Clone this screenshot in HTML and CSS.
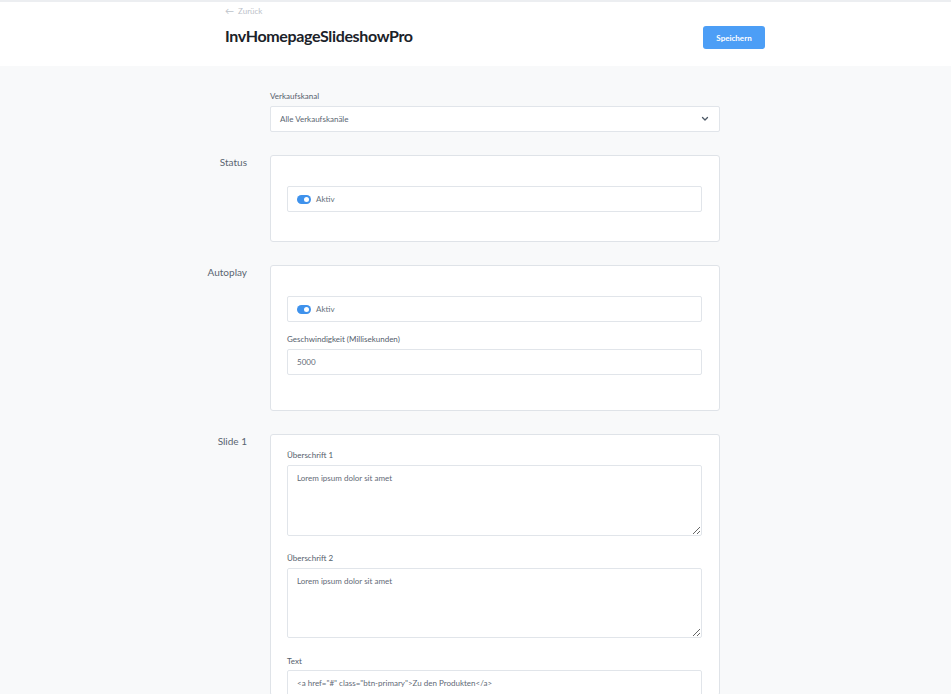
FILE: index.html
```html
<!DOCTYPE html>
<html lang="de">
<head>
<meta charset="utf-8">
<title>InvHomepageSlideshowPro</title>
<link rel="stylesheet" href="styles.css">
</head>
<body>
<div class="topline"></div>
<header class="page-header">
  <div class="header-inner">
    <div class="header-text">
      <a class="back-link" href="#"><span class="back-arrow">&larr;</span> Zurück</a>
      <h1 class="page-title">InvHomepageSlideshowPro</h1>
    </div>
    <button class="btn-primary" type="button">Speichern</button>
  </div>
</header>

<main class="page-content">
  <div class="config-grid">
    <div class="row-label"></div>
    <div class="channel-field">
      <label class="field-label">Verkaufskanal</label>
      <div class="select-box">
        <span>Alle Verkaufskanäle</span>
        <svg class="chevron" width="8" height="6" viewBox="0 0 8 6"><path d="M1.5 1.5 L4 4 L6.5 1.5" fill="none" stroke="#4d5966" stroke-width="1.3" stroke-linecap="round" stroke-linejoin="round"/></svg>
      </div>
    </div>

    <div class="row-label">Status</div>
    <section class="card card-pad-top">
      <div class="switch-field">
        <span class="toggle"><span class="knob"></span></span>
        <span class="switch-text">Aktiv</span>
      </div>
    </section>

    <div class="row-label">Autoplay</div>
    <section class="card card-pad-top card-pad-bottom">
      <div class="switch-field">
        <span class="toggle"><span class="knob"></span></span>
        <span class="switch-text">Aktiv</span>
      </div>
      <label class="field-label spaced-sm">Geschwindigkeit (Millisekunden)</label>
      <div class="text-input">5000</div>
    </section>

    <div class="row-label">Slide 1</div>
    <section class="card card-slide">
      <label class="field-label">Überschrift 1</label>
      <textarea class="text-area" readonly>Lorem ipsum dolor sit amet</textarea>
      <label class="field-label spaced">Überschrift 2</label>
      <textarea class="text-area short" readonly>Lorem ipsum dolor sit amet</textarea>
      <label class="field-label spaced-lg">Text</label>
      <div class="text-input">&lt;a href="#" class="btn-primary"&gt;Zu den Produkten&lt;/a&gt;</div>
    </section>
  </div>
</main>
</body>
</html>
```

FILE: styles.css
```css
* {
  box-sizing: border-box;
}

html, body {
  margin: 0;
  background: #f8f9fa;
  font-family: "Lato", "Open Sans", sans-serif;
  color: #5a6571;
  overflow: hidden;
}

.topline {
  height: 2px;
  background: #eceef1;
}

.page-header {
  background: #ffffff;
  height: 64px;
}

.header-inner {
  width: 540px;
  margin-left: 225px;
  display: flex;
  justify-content: space-between;
  align-items: flex-start;
}

.header-text {
  display: flex;
  flex-direction: column;
}

.back-link {
  margin-top: 4px;
  font-size: 8px;
  line-height: 10px;
  color: #bcc2c9;
  text-decoration: none;
}

.back-arrow {
  font-size: 9px;
  margin-right: 2px;
}

.page-title {
  margin: 10px 0 0;
  font-size: 16px;
  line-height: 20px;
  font-weight: 700;
  color: #1b2229;
  letter-spacing: -0.35px;
}

.btn-primary {
  margin-top: 24px;
  width: 62px;
  height: 23px;
  border: 0;
  border-radius: 3px;
  background: #4c9ef6;
  color: #ffffff;
  font-family: inherit;
  font-size: 8px;
  font-weight: 700;
  padding: 0;
}

.page-content {
  padding-top: 25px;
}

.config-grid {
  display: grid;
  grid-template-columns: 67px 450px;
  column-gap: 23px;
  row-gap: 23px;
  margin-left: 180px;
}

.row-label {
  text-align: right;
  font-size: 10px;
  line-height: 12px;
  color: #5a6571;
  padding-top: 1px;
}

.field-label {
  display: block;
  font-size: 8px;
  line-height: 10px;
  color: #55606c;
  margin-bottom: 5px;
}

.field-label.spaced {
  margin-top: 17px;
  margin-bottom: 5px;
}

.field-label.spaced-lg {
  margin-top: 18px;
  margin-bottom: 4px;
}

.field-label.spaced-sm {
  margin-top: 12px;
}

.select-box {
  height: 26px;
  background: #ffffff;
  border: 1px solid #e1e5ea;
  border-radius: 2px;
  display: flex;
  align-items: center;
  justify-content: space-between;
  padding: 0 10px 0 9px;
  font-size: 8px;
}

.chevron {
  display: block;
}

.card {
  background: #ffffff;
  border: 1px solid #dfe3e8;
  border-radius: 3px;
  padding: 0 17px 0 16px;
}

.card-pad-top {
  padding-top: 30px;
  padding-bottom: 29px;
}

.card-pad-bottom {
  padding-bottom: 35px;
}

.card-slide {
  padding-top: 15px;
  padding-bottom: 0;
  height: 262px;
  overflow: hidden;
}

.switch-field {
  height: 26px;
  border: 1px solid #e1e5ea;
  border-radius: 2px;
  display: flex;
  align-items: center;
  padding-left: 9px;
  font-size: 8px;
}

.switch-text {
  color: #66717d;
}

.toggle {
  position: relative;
  width: 14px;
  height: 9px;
  border-radius: 5px;
  background: #3f92ec;
  margin-right: 5px;
}

.knob {
  position: absolute;
  right: 2px;
  top: 2px;
  width: 5px;
  height: 5px;
  border-radius: 50%;
  background: #ffffff;
}

.text-input {
  height: 26px;
  border: 1px solid #e1e5ea;
  border-radius: 2px;
  display: flex;
  align-items: center;
  padding-left: 9px;
  font-size: 8px;
  color: #5f6a76;
  background: #ffffff;
}

.text-area {
  display: block;
  width: 100%;
  height: 71px;
  border: 1px solid #e1e5ea;
  border-radius: 2px;
  padding: 8px 9px;
  font-family: inherit;
  font-size: 8px;
  line-height: 9px;
  color: #5f6a76;
  resize: vertical;
  outline: none;
}

.text-area.short {
  height: 70px;
}
```
